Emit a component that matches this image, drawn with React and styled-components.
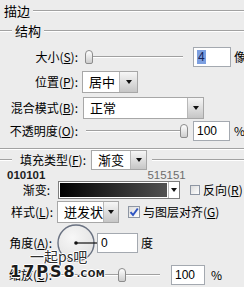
import styled, { createGlobalStyle } from "styled-components";

const GlobalStyle = createGlobalStyle`
  html, body {
    margin: 0;
    padding: 0;
    background: #ececec;
  }
  body {
    font-family: "Noto Sans CJK SC", "Liberation Sans", sans-serif;
    font-size: 12px;
    color: #000;
  }
`;

const Panel = styled.div`
  position: relative;
  width: 244px;
  height: 287px;
  overflow: hidden;
  background: #ececec;
  display: flex;
  flex-direction: column;
`;

const Etched = styled.div`
  flex: ${(p) => (p.$w ? "none" : "1")};
  width: ${(p) => (p.$w ? `${p.$w}px` : "auto")};
  height: 0;
  margin-left: ${(p) => p.$ml || 0}px;
  border-top: 1px solid #a2a2a2;
  border-bottom: 1px solid #ffffff;
`;

const Separator = styled(Etched)`
  flex: none;
  margin-top: ${(p) => p.$mt || 0}px;
`;

const Heading = styled.div`
  display: flex;
  align-items: center;
  height: ${(p) => p.$h}px;
  padding-left: ${(p) => p.$pl || 0}px;
  gap: ${(p) => p.$gap || 3}px;
  font-size: 13px;
  line-height: 14px;
  white-space: nowrap;
`;

const Row = styled.div`
  display: flex;
  align-items: center;
  height: ${(p) => p.$h}px;
  margin-top: ${(p) => p.$mt || 0}px;
  white-space: nowrap;
  flex-shrink: 0;
`;

const Label = styled.span`
  width: ${(p) => p.$w}px;
  flex-shrink: 0;
  text-align: right;
  line-height: 14px;
  margin-right: ${(p) => p.$mr || 0}px;
`;

const Text = styled.span`
  line-height: 14px;
  margin-left: ${(p) => p.$ml || 0}px;
`;

const Num = styled.span`
  font-family: "Liberation Sans", Arial, sans-serif;
  font-size: 11.5px;
  line-height: 11px;
  font-weight: ${(p) => (p.$bold ? 700 : 400)};
  color: ${(p) => (p.$bold ? "#1e1e1e" : "#6c6c6c")};
  margin-left: ${(p) => p.$ml || 0}px;
`;

const Field = styled.div`
  box-sizing: border-box;
  width: ${(p) => p.$w}px;
  height: 20px;
  margin-left: ${(p) => p.$ml || 0}px;
  flex-shrink: 0;
  border: 1px solid #a4a9b0;
  background: #fff;
  display: flex;
  align-items: center;
  padding-left: 3px;
  font-family: "Liberation Sans", Arial, sans-serif;
  font-size: 12px;
`;

const Selected = styled.span`
  background: #7c9fe0;
  color: #14235a;
  padding: 0 1px;
  line-height: 14px;
`;

const Select = styled.div`
  box-sizing: border-box;
  display: flex;
  width: ${(p) => p.$w}px;
  height: ${(p) => p.$h || 22}px;
  margin-left: ${(p) => p.$ml || 0}px;
  flex-shrink: 0;
  border: 1px solid #a7a7a7;
  background: #fff;
`;

const SelectText = styled.span`
  flex: 1;
  display: flex;
  align-items: center;
  padding-left: 6px;
  font-size: 13px;
  line-height: 14px;
`;

const ArrowButton = styled.span`
  width: ${(p) => p.$w || 16}px;
  flex-shrink: 0;
  border-left: 1px solid #b8b8b8;
  background: ${(p) => (p.$plain ? "#fff" : "linear-gradient(#f6f6f6, #c6c6c6)")};
  display: flex;
  align-items: center;
  justify-content: center;
  &::after {
    content: "";
    border-left: 3.5px solid transparent;
    border-right: 3.5px solid transparent;
    border-top: 4px solid #111;
  }
`;

const Slider = styled.div`
  position: relative;
  width: ${(p) => p.$w}px;
  height: 14px;
  margin-left: ${(p) => p.$ml || 0}px;
  flex-shrink: 0;
  &::before {
    content: "";
    position: absolute;
    left: 0;
    right: 0;
    top: 6px;
    border-top: 1px solid #a0a0a0;
    border-bottom: 1px solid #fff;
  }
`;

const Thumb = styled.span`
  position: absolute;
  top: 0;
  left: ${(p) => p.$x}px;
  box-sizing: border-box;
  width: 8px;
  height: 14px;
  border: 1px solid #8c8c8c;
  border-radius: 4px 4px 2px 2px;
  background: linear-gradient(#ffffff, #cdcdcd);
`;

const GradientBox = styled.div`
  box-sizing: border-box;
  display: flex;
  width: ${(p) => p.$w}px;
  height: 18px;
  flex-shrink: 0;
  border: 1px solid #7d7d7d;
  background: #fff;
`;

const Ramp = styled.span`
  flex: 1;
  margin: 1px;
  background: linear-gradient(to right, #010101, #515151);
`;

const Check = styled.span`
  box-sizing: border-box;
  width: ${(p) => p.$s}px;
  height: ${(p) => p.$s}px;
  margin-left: ${(p) => p.$ml || 0}px;
  flex-shrink: 0;
  border: 1px solid #8e96a3;
  background: linear-gradient(135deg, #dcdcdc, #ffffff);
  display: flex;
  align-items: center;
  justify-content: center;
`;

const Dial = styled.svg`
  flex-shrink: 0;
  margin-left: 5px;
  display: block;
`;

const Watermark = styled.div`
  position: absolute;
  left: ${(p) => p.$x}px;
  top: ${(p) => p.$y}px;
  color: #2e2e2e;
  white-space: nowrap;
  text-shadow: 1px 0 #fff, -1px 0 #fff, 0 1px #fff, 0 -1px #fff;
`;

const WaterCn = styled(Watermark)`
  font-size: 14px;
  line-height: 16px;
`;

const WaterEn = styled(Watermark)`
  font-family: "DejaVu Sans", sans-serif;
  font-weight: 700;
  font-size: 16px;
  line-height: 15px;
  letter-spacing: 2px;
  color: #1c1c1c;
  small {
    font-size: 9px;
    letter-spacing: 0.5px;
  }
`;

export default function App() {
  return (
    <>
      <GlobalStyle />
      <Panel>
        <Heading $h={22} $pl={4}>
          描边
          <Etched />
        </Heading>
        <Heading $h={18} $gap={3}>
          <Etched $w={12} />
          结构
          <Etched />
        </Heading>

        <Row $h={22} $mt={6}>
          <Label $w={78}>
            大小(<u>S</u>):
          </Label>
          <Slider $w={98} $ml={7}>
            <Thumb $x={0} />
          </Slider>
          <Field $w={38} $ml={10}>
            <Selected>4</Selected>
          </Field>
          <Text $ml={3}>像素</Text>
        </Row>

        <Row $h={22} $mt={3}>
          <Label $w={78}>
            位置(<u>P</u>):
          </Label>
          <Select $w={56} $ml={4}>
            <SelectText>居中</SelectText>
            <ArrowButton $w={17} />
          </Select>
        </Row>

        <Row $h={22} $mt={4}>
          <Label $w={78}>
            混合模式(<u>B</u>):
          </Label>
          <Select $w={121} $ml={5}>
            <SelectText>正常</SelectText>
            <ArrowButton $w={15} />
          </Select>
        </Row>

        <Row $h={20} $mt={2}>
          <Label $w={78}>
            不透明度(<u>O</u>):
          </Label>
          <Slider $w={102} $ml={8}>
            <Thumb $x={94} />
          </Slider>
          <Field $w={37} $ml={5}>
            100
          </Field>
          <Text $ml={4}>%</Text>
        </Row>

        <Separator $mt={7} />

        <Row $h={20}>
          <Etched $w={12} />
          <Label $w={74} $mr={5}>
            填充类型(<u>F</u>):
          </Label>
          <Select $w={56} $h={20}>
            <SelectText>渐变</SelectText>
            <ArrowButton $w={15} />
          </Select>
          <Etched $ml={5} />
        </Row>

        <Row $h={11}>
          <Num $bold $ml={7}>
            010101
          </Num>
          <Num $ml={102}>515151</Num>
        </Row>

        <Row $h={18}>
          <Label $w={50} $mr={8}>
            渐变:
          </Label>
          <GradientBox $w={122}>
            <Ramp />
            <ArrowButton $w={10} $plain />
          </GradientBox>
          <Check $s={10} $ml={10} />
          <Text $ml={3}>
            反向(<u>R</u>)
          </Text>
        </Row>

        <Row $h={22} $mt={2}>
          <Label $w={53} $mr={4}>
            样式(<u>L</u>):
          </Label>
          <Select $w={62}>
            <SelectText>迸发状</SelectText>
            <ArrowButton $w={14} />
          </Select>
          <Check $s={12} $ml={9}>
            <svg width="10" height="10" viewBox="0 0 10 10">
              <path d="M1.5 5.2 L4 8 L8.8 1.5" fill="none" stroke="#2f55c2" strokeWidth="2" />
            </svg>
          </Check>
          <Text $ml={3}>
            与图层对齐(<u>G</u>)
          </Text>
        </Row>

        <Row $h={40}>
          <Label $w={52}>
            角度(<u>A</u>):
          </Label>
          <Dial width="40" height="40" viewBox="0 0 40 40">
            <defs>
              <radialGradient id="dialFill" cx="0.4" cy="0.35" r="0.7">
                <stop offset="0" stopColor="#f7f7f7" />
                <stop offset="1" stopColor="#e2e2e2" />
              </radialGradient>
            </defs>
            <circle cx="19" cy="20" r="18" fill="url(#dialFill)" stroke="#6a7282" strokeWidth="1.4" />
            <circle cx="19" cy="20" r="1.8" fill="#111" />
            <line x1="19" y1="20" x2="40" y2="20" stroke="#111" strokeWidth="1.2" />
          </Dial>
          <Field $w={41}>0</Field>
          <Text $ml={3}>度</Text>
        </Row>

        <Row $h={20} $mt={2}>
          <Label $w={52}>
            缩放(<u>C</u>):
          </Label>
          <Slider $w={103} $ml={5}>
            <Thumb $x={61} />
          </Slider>
          <Field $w={34} $ml={11}>
            100
          </Field>
          <Text $ml={6}>%</Text>
        </Row>

        <WaterCn $x={30} $y={248}>
          一起ps吧
        </WaterCn>
        <WaterEn $x={10} $y={264}>
          17PS8<small>.COM</small>
        </WaterEn>
      </Panel>
    </>
  );
}
